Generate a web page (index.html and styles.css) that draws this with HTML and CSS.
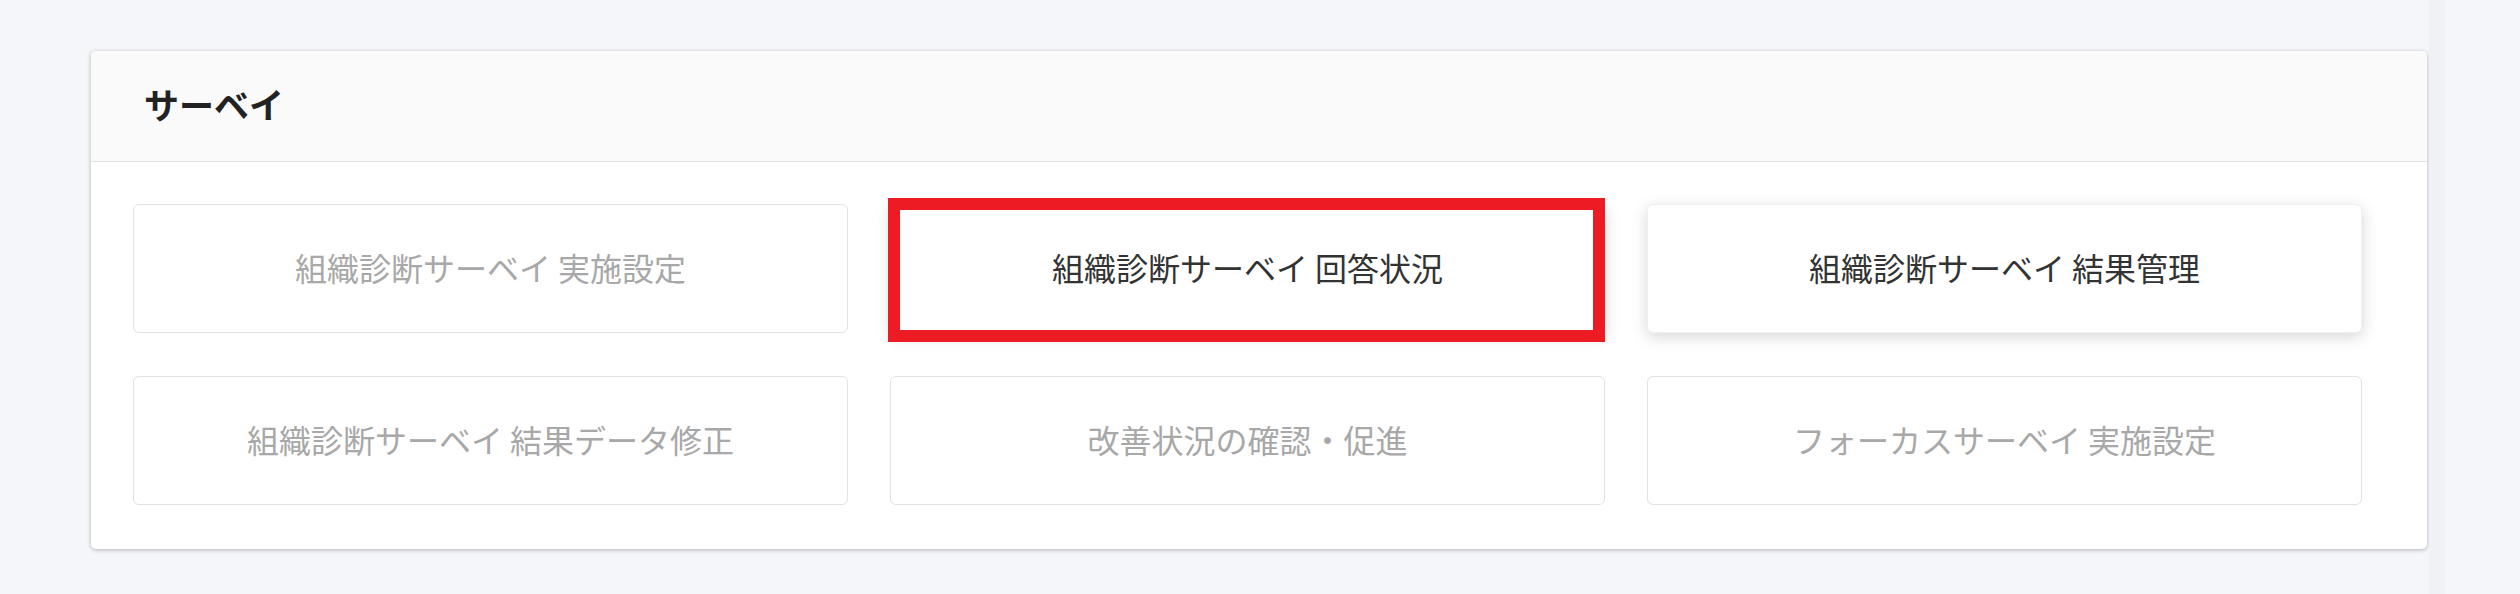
FILE: index.html
```html
<!DOCTYPE html>
<html lang="ja">
<head>
<meta charset="utf-8">
<title>サーベイ</title>
<link rel="stylesheet" href="styles.css">
</head>
<body>
<div class="layout">
  <main class="main">
    <section class="card">
      <header class="card-header">
        <h2 class="card-title">サーベイ</h2>
      </header>
      <div class="card-body">
        <div class="menu-grid">
          <a class="menu-btn is-disabled">組織診断サーベイ 実施設定</a>
          <a class="menu-btn is-active is-highlight">組織診断サーベイ 回答状況<span class="highlight-frame"></span></a>
          <a class="menu-btn is-active">組織診断サーベイ 結果管理</a>
          <a class="menu-btn is-disabled">組織診断サーベイ 結果データ修正</a>
          <a class="menu-btn is-disabled">改善状況の確認・促進</a>
          <a class="menu-btn is-disabled">フォーカスサーベイ 実施設定</a>
        </div>
      </div>
    </section>
  </main>
  <div class="divider"></div>
  <aside class="side"></aside>
</div>
</body>
</html>
```

FILE: styles.css
```css
html, body {
  margin: 0;
  padding: 0;
}
body {
  background: #f5f6fa;
  font-family: "Noto Sans CJK JP", "Noto Sans", sans-serif;
  width: 2520px;
  height: 594px;
  overflow: hidden;
}
.layout {
  display: flex;
  height: 594px;
}
.main {
  flex: 0 0 2429px;
  box-sizing: border-box;
  padding: 51px 0 0 91px;
}
.divider {
  flex: 0 0 16px;
  background: #f0f1f4;
}
.side {
  flex: 1;
  background: #f5f6fa;
}
.card {
  width: 2336px;
  background: #ffffff;
  border-radius: 5px;
  box-shadow: 0 1px 4px rgba(0, 0, 0, 0.28);
  overflow: visible;
}
.card-header {
  height: 111px;
  box-sizing: border-box;
  background: #fafafa;
  border-bottom: 1px solid #e3e3e3;
  border-radius: 5px 5px 0 0;
  display: flex;
  align-items: center;
  padding: 0 0 6px 53px;
}
.card-title {
  margin: 0;
  font-size: 35px;
  font-weight: 700;
  color: #222222;
  line-height: 1;
}
.card-body {
  padding: 42px 66px 44px 42px;
}
.menu-grid {
  display: grid;
  grid-template-columns: repeat(3, 715px);
  grid-auto-rows: 129px;
  column-gap: 42px;
  row-gap: 43px;
}
.menu-btn {
  position: relative;
  display: flex;
  align-items: center;
  justify-content: center;
  box-sizing: border-box;
  border: 1px solid #e2e2e2;
  border-radius: 6px;
  background: #ffffff;
  font-size: 32px;
  color: #a8a8a8;
  text-decoration: none;
  padding-bottom: 4px;
}
.menu-btn.is-active {
  color: #333333;
  border-color: #f0f0f0;
  box-shadow: 0 4px 16px rgba(0, 0, 0, 0.16);
}
.highlight-frame {
  position: absolute;
  left: -3px;
  top: -7px;
  right: -1px;
  bottom: -10px;
  border: 12px solid #ed1c24;
  pointer-events: none;
}
```
